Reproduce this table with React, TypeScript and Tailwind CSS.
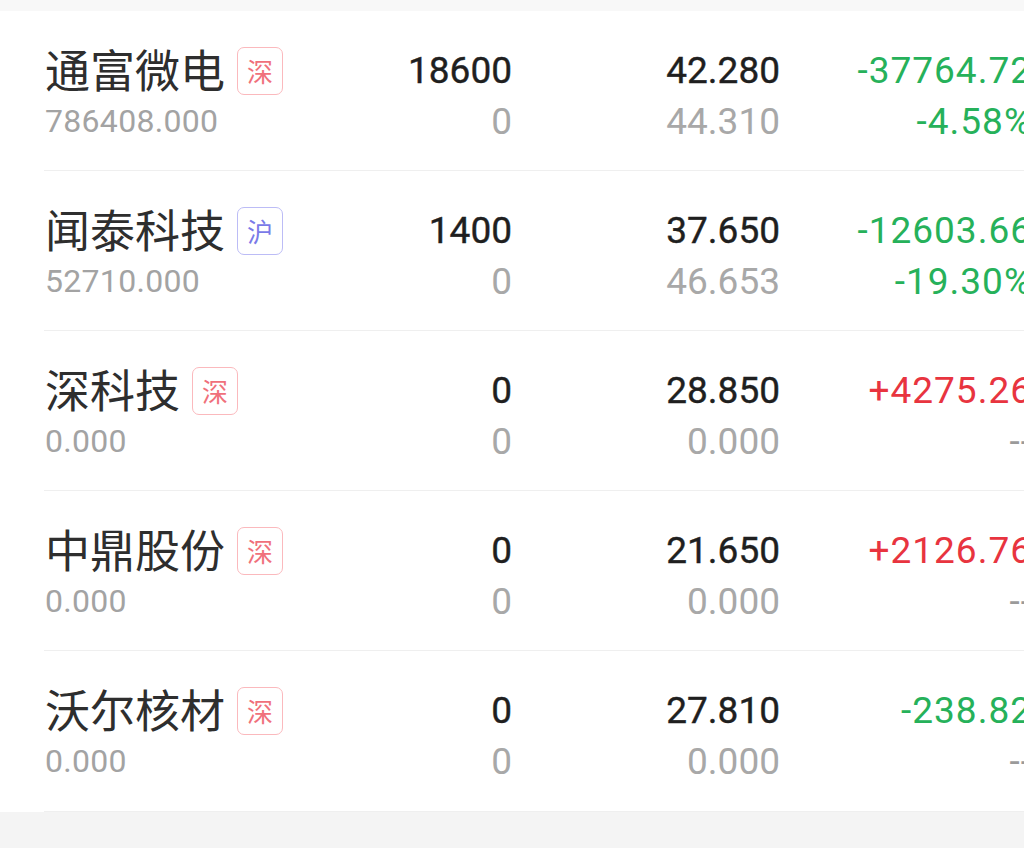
import React from "react";

type Row = {
  name: string;
  market: "深" | "沪";
  code: string;
  qty: string;
  qty2: string;
  price: string;
  price2: string;
  pl: string;
  pl2: string;
  up: boolean | null;
};

const rows: Row[] = [
  { name: "通富微电", market: "深", code: "786408.000", qty: "18600", qty2: "0", price: "42.280", price2: "44.310", pl: "-37764.72", pl2: "-4.58%", up: false },
  { name: "闻泰科技", market: "沪", code: "52710.000", qty: "1400", qty2: "0", price: "37.650", price2: "46.653", pl: "-12603.66", pl2: "-19.30%", up: false },
  { name: "深科技", market: "深", code: "0.000", qty: "0", qty2: "0", price: "28.850", price2: "0.000", pl: "+4275.26", pl2: "--", up: true },
  { name: "中鼎股份", market: "深", code: "0.000", qty: "0", qty2: "0", price: "21.650", price2: "0.000", pl: "+2126.76", pl2: "--", up: true },
  { name: "沃尔核材", market: "深", code: "0.000", qty: "0", qty2: "0", price: "27.810", price2: "0.000", pl: "-238.82", pl2: "--", up: false },
];

const num = { fontFamily: "Roboto, 'Liberation Sans', sans-serif" };
const cjk = { fontFamily: "'Noto Sans CJK SC', 'Noto Sans', sans-serif" };

function Badge({ m }: { m: "深" | "沪" }) {
  const sz = m === "深";
  return (
    <div
      className={
        "ml-[12px] flex h-[48px] w-[46px] shrink-0 items-center justify-center rounded-[7px] border-[1.5px] text-[26px] leading-none " +
        (sz ? "border-[#fbb9bd] text-[#f0707b]" : "border-[#bcbcf6] text-[#7a7ae8]")
      }
      style={cjk}
    >
      {m}
    </div>
  );
}

export default function App() {
  return (
    <div className="h-[848px] w-[1024px] overflow-hidden bg-[#f4f4f4]">
      <div className="h-[11px] bg-[#f8f8f8]" />
      <div className="bg-white pl-[44px]">
        {rows.map((r, i) => (
          <div key={i} className="flex h-[160px] border-b border-[#efefef] pl-[1px] pt-[34px] last:h-[161px]">
            <div className="w-[301px] shrink-0">
              <div className="flex h-[51px] items-center">
                <span className="mt-[-4px] text-[45px] leading-[51px] text-[#2e2e2e]" style={cjk}>
                  {r.name}
                </span>
                <Badge m={r.market} />
              </div>
              <div className="text-[32px] leading-[51px] tracking-[0.3px] text-[#a3a3a3]" style={num}>
                {r.code}
              </div>
            </div>
            <div className="w-[166px] shrink-0 text-right" style={num}>
              <div className="text-[37px] leading-[51px] text-[#1f1f1f] [-webkit-text-stroke:0.4px_#1f1f1f]">{r.qty}</div>
              <div className="text-[37px] leading-[51px] text-[#a8a8a8]">{r.qty2}</div>
            </div>
            <div className="w-[268px] shrink-0 text-right" style={num}>
              <div className="text-[37px] leading-[51px] text-[#1f1f1f] [-webkit-text-stroke:0.4px_#1f1f1f]">{r.price}</div>
              <div className="text-[37px] leading-[51px] text-[#a8a8a8]">{r.price2}</div>
            </div>
            <div className="w-[252px] shrink-0 text-right tracking-[1px]" style={num}>
              <div className={"text-[37px] leading-[51px] " + (r.up ? "text-[#e8343f]" : "text-[#26b15a]")}>{r.pl}</div>
              <div
                className={
                  "text-[37px] leading-[51px] " +
                  (r.pl2 === "--" ? "text-[#9a9a9a]" : r.up ? "text-[#e8343f]" : "text-[#26b15a]")
                }
              >
                {r.pl2}
              </div>
            </div>
          </div>
        ))}
      </div>
    </div>
  );
}
